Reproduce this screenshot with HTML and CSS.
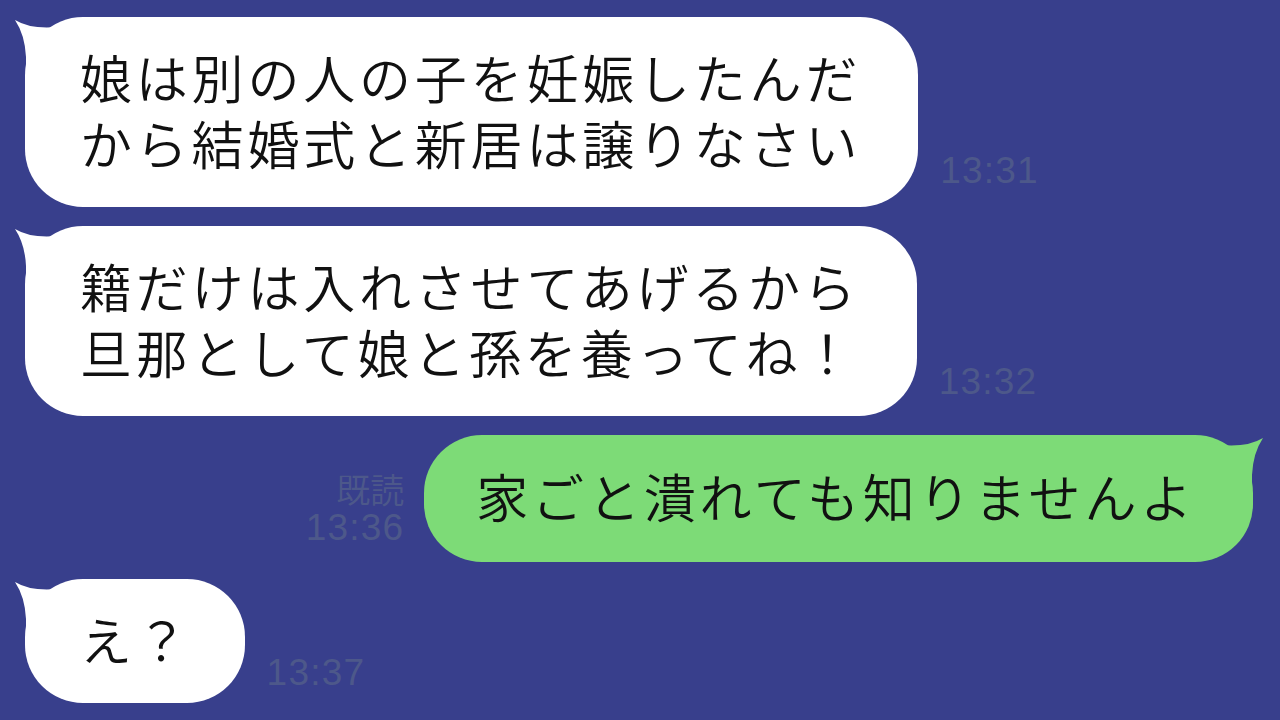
FILE: index.html
```html
<!DOCTYPE html>
<html lang="ja">
<head>
  <meta charset="UTF-8">
  <meta name="viewport" content="width=device-width, initial-scale=1.0">
  <title>トーク</title>
  <link rel="stylesheet" href="styles.css">
</head>
<body>
  <div class="chat">

    <div class="row">
      <div class="bubble">
        <svg class="tail" viewBox="-12 0 60 60" width="60" height="60">
          <path d="M-10 3 Q10 15 46 8 L46 60 L1 60 L1 40 Q0 18 -10 3 Z" fill="#fff"/>
        </svg>
        <p>娘は別の人の子を妊娠したんだ<br>から結婚式と新居は譲りなさい</p>
      </div>
      <span class="time">13:31</span>
    </div>

    <div class="row">
      <div class="bubble">
        <svg class="tail" viewBox="-12 0 60 60" width="60" height="60">
          <path d="M-10 3 Q10 15 46 8 L46 60 L1 60 L1 40 Q0 18 -10 3 Z" fill="#fff"/>
        </svg>
        <p>籍だけは入れさせてあげるから<br>旦那として娘と孫を養ってね！</p>
      </div>
      <span class="time time-2">13:32</span>
    </div>

    <div class="row row-me">
      <div class="meta">
        <span class="read">既読</span>
        <span class="time">13:36</span>
      </div>
      <div class="bubble bubble-me">
        <svg class="tail tail-me" viewBox="-12 0 60 60" width="60" height="60">
          <path d="M-10 3 Q10 15 46 8 L46 60 L1 60 L1 40 Q0 18 -10 3 Z" fill="#7ddb77"/>
        </svg>
        <p>家ごと潰れても知りませんよ</p>
      </div>
    </div>

    <div class="row">
      <div class="bubble bubble-short">
        <svg class="tail" viewBox="-12 0 60 60" width="60" height="60">
          <path d="M-10 3 Q10 15 46 8 L46 60 L1 60 L1 40 Q0 18 -10 3 Z" fill="#fff"/>
        </svg>
        <p>え？</p>
      </div>
      <span class="time time-4">13:37</span>
    </div>

  </div>
</body>
</html>
```

FILE: styles.css
```css
body {
  margin: 0;
  background-color: #383f8c;
  font-family: "Noto Sans CJK JP", sans-serif;
  height: 720px;
  overflow: hidden;
}

.chat {
  padding: 17px 27px 0 25px;
  display: flex;
  flex-direction: column;
  gap: 19px;
}

.row {
  display: flex;
  align-items: flex-end;
  gap: 22px;
}

.row-me {
  justify-content: flex-end;
  gap: 20px;
  margin-bottom: -2px;
}

.bubble {
  position: relative;
  background-color: #fff;
  border-radius: 58px;
  padding: 27px 57px 31px 55px;
}

.bubble p {
  position: relative;
  margin: 0;
  font-size: 52px;
  font-weight: 350;
  line-height: 66px;
  letter-spacing: 3.8px;
  color: #111;
  white-space: nowrap;
}

.bubble-me {
  background-color: #7ddb77;
  padding-top: 28px;
  padding-bottom: 33px;
  padding-left: 52px;
}

.bubble-short {
  padding-right: 53px;
}

.tail {
  position: absolute;
  left: -12px;
  top: 0;
}

.tail-me {
  left: auto;
  right: -12px;
  transform: scaleX(-1);
}

.time {
  font-family: "Liberation Sans", Arial, sans-serif;
  font-size: 37px;
  line-height: 36px;
  letter-spacing: 1.2px;
  color: #4d588a;
  margin-bottom: 18px;
}

.time-2 {
  margin-bottom: 16px;
}

.time-4 {
  margin-bottom: 12px;
}

.meta {
  display: flex;
  flex-direction: column;
  align-items: flex-end;
  margin-bottom: 16px;
}

.meta .time {
  margin-bottom: 0;
}

.read {
  font-size: 34px;
  font-weight: 350;
  line-height: 42px;
  color: #4d588a;
}
```
